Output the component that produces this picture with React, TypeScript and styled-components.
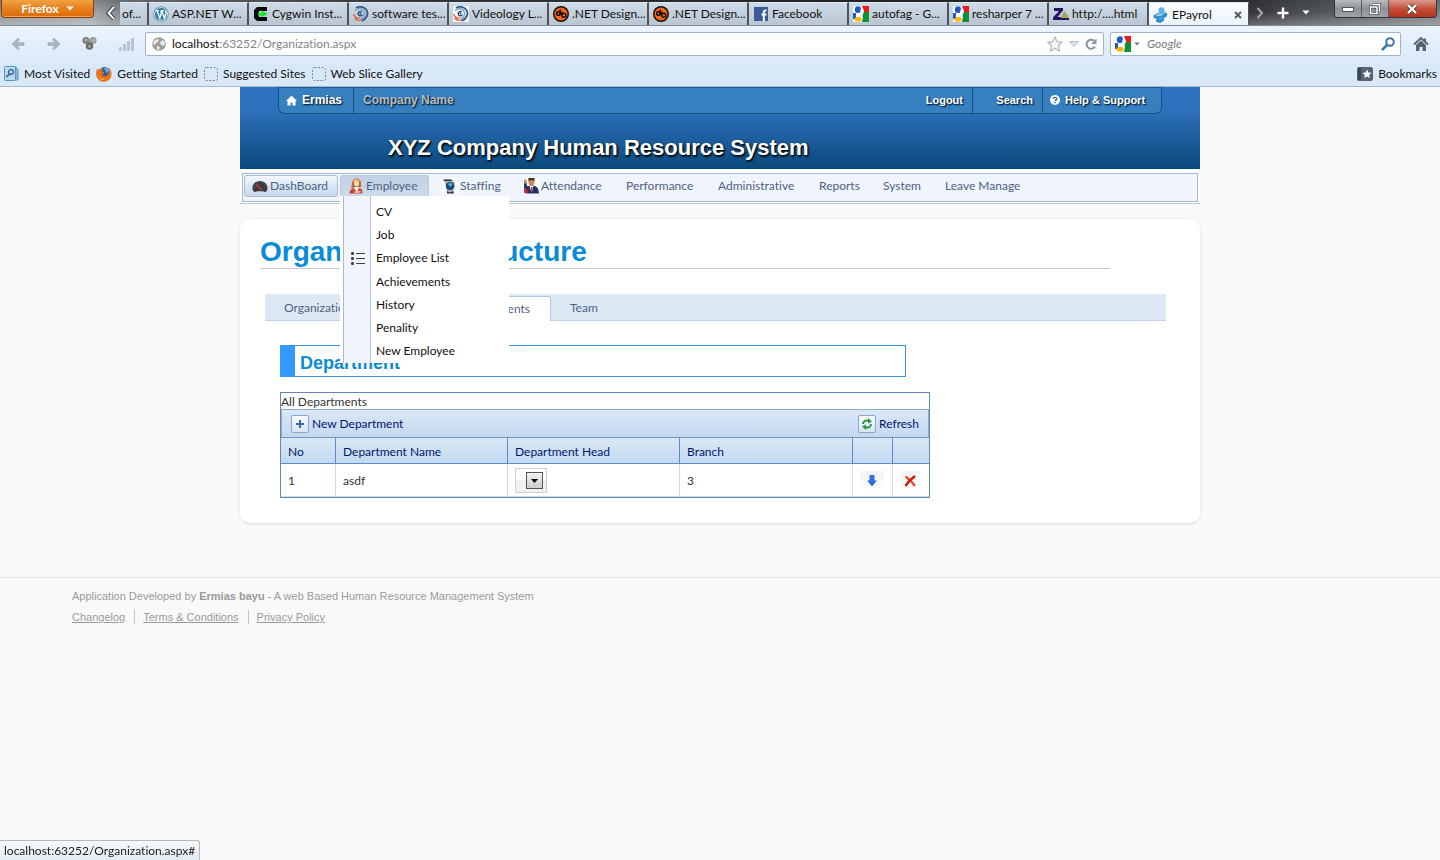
import React from "react";
import styled, { createGlobalStyle, css } from "styled-components";

const ui = `Lato, "Open Sans", sans-serif`;
const arial = `"Liberation Sans", Arial, sans-serif`;

const Global = createGlobalStyle`
  * { box-sizing: border-box; }
  html, body { margin: 0; padding: 0; }
  body { background: #f9f9f9; font-family: ${ui}; font-size: 12px; line-height: 16px; font-variant-ligatures: none; color: #333; }
  button, input, select { font: inherit; font-variant-ligatures: none; color: inherit; margin: 0; }
  button { padding: 0; border: 0; background: none; cursor: pointer; }
  a { color: inherit; text-decoration: none; }
  svg { display: block; flex: none; }
  ul { list-style: none; margin: 0; padding: 0; }
`;

/* ---------- browser chrome ---------- */

const Screen = styled.div`
  min-height: 100vh;
  display: flex;
  flex-direction: column;
`;

const TabStrip = styled.div`
  display: flex;
  align-items: stretch;
  height: 26px;
  overflow: hidden;
  border-bottom: 1px solid #7d8893;
  background:
    linear-gradient(rgba(30, 32, 36, 0.25), rgba(255, 255, 255, 0) 50%, rgba(255, 255, 255, 0.25)),
    linear-gradient(90deg, #8f979e 0, #a3a9af 90px, #7b7f84 130px, #3a3c3f 400px, #222427 900px, #303236 1240px, #4b4e53 1300px, #7d8288 1440px);
`;

const FirefoxButton = styled.button`
  width: 93px;
  height: 18px;
  margin: 0 10px 0 1px;
  display: flex;
  align-items: center;
  justify-content: center;
  gap: 7px;
  color: #fff;
  font-weight: 700;
  border: 1px solid #8d3f06;
  border-top: 0;
  border-radius: 0 0 4px 4px;
  background: linear-gradient(#f0a243, #e8811f 50%, #dc6a08);
  box-shadow: inset 0 -1px 0 #f0a35a;
`;

const StripButton = styled.button<{ $w: number }>`
  width: ${(p) => p.$w}px;
  flex: none;
  display: flex;
  align-items: center;
  justify-content: center;
`;

const BrowserTab = styled.button<{ $active?: boolean; $clipped?: boolean }>`
  flex: 0 1 ${(p) => (p.$clipped ? 29 : 100)}px;
  min-width: 0;
  height: 23px;
  margin-top: 2px;
  padding-left: ${(p) => (p.$clipped ? 2 : 4)}px;
  display: flex;
  align-items: center;
  gap: 3px;
  color: #111;
  white-space: nowrap;
  text-align: left;
  border-right: 2px solid #4e5359;
  border-top: 1px solid #dfe8f1;
  background: linear-gradient(#cedbe8, #b9c5d0);
  ${(p) => p.$active && css`
    height: 24px;
    padding-right: 6px;
    border-right-width: 1px;
    background: linear-gradient(#fbfdff, #eaf3fc);
  `}
`;

const TabText = styled.span`
  flex: 1;
`;

const WindowButtons = styled.div`
  display: flex;
  margin-left: auto;
  margin-right: 3px;
  height: 18px;
  border: 1px solid #33363b;
  border-top: 0;
  border-radius: 0 0 4px 4px;
  overflow: hidden;
`;

const WindowButton = styled.button<{ $close?: boolean }>`
  width: ${(p) => (p.$close ? 47 : 27)}px;
  display: flex;
  align-items: center;
  justify-content: center;
  border-right: 1px solid ${(p) => (p.$close ? "transparent" : "#5c6067")};
  background: ${(p) => (p.$close ? "linear-gradient(#d99a8c, #c5513b 50%, #b5321a)" : "linear-gradient(#b9bdc2, #8d9298 50%, #9fa4aa)")};
`;

const Toolbars = styled.div`
  background: linear-gradient(#ebf4fd, #d9e8f7 40px);
  border-bottom: 1px solid #a3b9d2;
`;

const NavBar = styled.div`
  height: 35px;
  display: flex;
  align-items: center;
`;

const NavButton = styled.button<{ $w: number }>`
  width: ${(p) => p.$w}px;
  flex: none;
  height: 24px;
  display: flex;
  align-items: center;
  justify-content: center;
`;

const Field = styled.div<{ $w?: number }>`
  flex: ${(p) => (p.$w ? `0 1 ${p.$w}px` : "1")};
  height: 24px;
  display: flex;
  align-items: center;
  margin-right: ${(p) => (p.$w ? 0 : 6)}px;
  padding: 0 5px 0 ${(p) => (p.$w ? 4 : 6)}px;
  background: #fff;
  border: 1px solid #a0b4cb;
  border-radius: 2px;
`;

const UrlText = styled.a`
  flex: 1;
  margin-left: 6px;
  color: #858585;
  b { color: #111; font-weight: 400; }
`;

const SearchInput = styled.input`
  flex: 1;
  min-width: 0;
  border: 0;
  padding: 0;
  margin-left: 4px;
  outline: 0;
  background: none;
  &::placeholder { color: #777; opacity: 1; font-style: italic; }
`;

const BookmarkBar = styled.nav`
  height: 25px;
  display: flex;
  align-items: center;
  padding: 0 3px 0 4px;
  gap: 6px;
`;

const Bookmark = styled.a<{ $end?: boolean }>`
  display: flex;
  align-items: center;
  gap: 5px;
  color: #111;
  margin-left: ${(p) => (p.$end ? "auto" : "0")};
`;

const StatusBubble = styled.output`
  position: fixed;
  left: 0;
  bottom: 0;
  height: 20px;
  padding: 2px 4px;
  color: #222;
  background: linear-gradient(#f6f9fc, #e4ebf3);
  border: 1px solid #b5b8bc;
  border-left: 0;
  border-bottom: 0;
  border-radius: 0 3px 0 0;
`;

/* ---------- page ---------- */

const Page = styled.div`
  width: 100%;
  max-width: 960px;
  margin: 0 auto;
`;

const Header = styled.header`
  height: 82px;
  background: linear-gradient(#2f72c0, #2d70ba 30%, #0b497b);
`;

const TopBar = styled.div`
  height: 27px;
  margin: 0 38px;
  display: flex;
  font: 700 11px/24px ${arial};
  color: #fff;
  text-shadow: 1px 1px 1px #0b2c4a, 1px 1px 2px #0b2c4a;
  background: #3780c0;
  border: 1px solid #12507f;
  border-top-color: #1d5b93;
  border-radius: 0 0 6px 6px;
`;

const TopLink = styled.a<{ $w?: number; $big?: boolean; $right?: boolean }>`
  width: ${(p) => (p.$w ? `${p.$w}px` : "auto")};
  font-size: ${(p) => (p.$big ? 12 : 11)}px;
  display: flex;
  align-items: center;
  justify-content: ${(p) => (p.$right ? "flex-end" : "flex-start")};
  gap: 5px;
  padding: 0 9px 1px 7px;
  white-space: nowrap;
  border-right: 1px solid #12507f;
  &:last-child { border-right: 0; }
`;

const CompanyName = styled.span`
  flex: 1;
  padding-left: 9px;
  font-size: 12px;
  color: #b9bcc0;
`;

const SystemTitle = styled.h1`
  margin: 0;
  padding: 20px 0 0 148px;
  font: 700 22px/28px ${arial};
  color: #fff;
  text-shadow: 1px 1px 2px #000, 1px 2px 2px #06233d;
`;

const MenuFrame = styled.div`
  padding: 4px 2px 1px;
  background: #fff;
  border-bottom: 1px solid #c9c9c9;
`;

const MenuBar = styled.ul`
  height: 29px;
  padding: 1px;
  display: flex;
  background: #f0f4fc;
  border: 1px solid #a5b9d3;
  color: #4d6282;
`;

const MenuItem = styled.li<{ $w: number }>`
  position: relative;
  width: ${(p) => p.$w}px;
`;

const MenuButton = styled.button<{ $look?: "raised" | "open"; $pad: number }>`
  width: calc(100% - 2px);
  height: 22px;
  display: flex;
  align-items: center;
  gap: 2px;
  padding-left: ${(p) => p.$pad}px;
  white-space: nowrap;
  border: 1px solid transparent;
  border-radius: 3px;
  ${(p) => p.$look === "raised" && css`
    border-color: #a5bbd6;
    background: linear-gradient(#f3f8fe, #dbe7f5 50%, #c8d8ec);
  `}
  ${(p) => p.$look === "open" && css`
    border-color: #b9c9df;
    border-bottom-color: #cddaeb;
    border-radius: 3px 3px 0 0;
    background: linear-gradient(#c3d1e5, #cddaeb);
  `}
`;

const DropDown = styled.ul`
  position: absolute;
  z-index: 2;
  top: 21px;
  left: 0;
  width: 169px;
  padding: 4px 0 1px 3px;
  color: #111;
  background: linear-gradient(90deg, #fff 3px, #a9b9d1 3px, #a9b9d1 4px, #f0f4fc 4px, #f0f4fc 30px, #b2c6e0 30px, #b2c6e0 31px, #fff 31px);
`;

const DropItem = styled.li<{ $icon?: boolean }>`
  height: ${(p) => (p.$icon ? 24 : 23)}px;
  display: grid;
  grid-template-columns: 33px 1fr;
  align-items: center;
  svg { margin-left: 8px; }
  a { grid-column: 2; }
`;

const Card = styled.main`
  margin-top: 15px;
  padding: 16px 34px 25px 20px;
  background: #fff;
  border-radius: 10px;
  box-shadow: 0 1px 3px #dcdcdc;
`;

const PageTitle = styled.h2`
  margin: 0 56px 25px 0;
  font: 700 28px/33px ${arial};
  color: #0a8bd8;
  border-bottom: 1px solid #c8c8c8;
`;

const Tabs = styled.div`
  height: 27px;
  margin-left: 5px;
  display: flex;
  align-items: flex-end;
  background: #dde8f5;
  border-bottom: 1px solid #c3d2e6;
`;

const Tab = styled.button<{ $w: number; $active?: boolean }>`
  width: ${(p) => p.$w}px;
  height: 25px;
  padding-left: 19px;
  text-align: left;
  color: #4d6282;
  ${(p) => p.$active && css`
    background: #fff;
    border: 1px solid #b1c5e0;
    border-bottom: 0;
    border-radius: 3px 3px 0 0;
    margin-bottom: -1px;
  `}
`;

const Section = styled.section`
  padding: 24px 0 0 20px;
`;

const SectionTitle = styled.h3`
  max-width: 626px;
  height: 32px;
  margin: 0 0 15px;
  padding-left: 5px;
  font: 700 18px/35px ${arial};
  color: #0a8bd8;
  border: 1px solid #3b93e8;
  border-left: 15px solid #3399ff;
`;

const Grid = styled.div`
  max-width: 650px;
  border: 1px solid #6288b8;
`;

const GridCaption = styled.div`
  height: 16px;
  line-height: 18px;
`;

const CommandBar = styled.div`
  height: 29px;
  padding: 0 9px;
  display: flex;
  align-items: center;
  justify-content: space-between;
  border: 1px solid #8fabd0;
  border-bottom-color: #6f95c4;
  background: linear-gradient(#dbe7f5, #c3d9f1);
  color: #00156e;
`;

const Command = styled.button`
  display: flex;
  align-items: center;
  gap: 3px;
  line-height: 20px;
`;

const CommandIcon = styled.span`
  width: 18px;
  height: 18px;
  display: grid;
  place-items: center;
  border: 1px solid #8ba9cf;
  border-radius: 2px;
  background: linear-gradient(#f7fafd, #d8e5f4);
`;

const Table = styled.table`
  width: 100%;
  table-layout: fixed;
  border-collapse: separate;
  border-spacing: 0;
  th {
    height: 26px;
    padding: 2px 7px 0;
    text-align: left;
    font-weight: 400;
    color: #00156e;
    background: linear-gradient(#dbe7f5, #c3d9f1);
    border-bottom: 1px solid #5d8cc9;
    border-right: 1px solid #5d8cc9;
  }
  td {
    height: 33px;
    padding: 1px 7px 0;
    border-right: 1px solid #d0dbea;
    border-bottom: 1px solid #d0dbea;
  }
  th:last-child, td:last-child { border-right: 0; }
`;

const Combo = styled.label`
  width: 32px;
  height: 25px;
  display: grid;
  align-items: center;
  justify-items: end;
  padding-right: 3px;
  border: 1px solid #cfcfcf;
  background: linear-gradient(#fff 50%, #f1f1f1 50%);
  select, svg { grid-area: 1 / 1; }
  svg { pointer-events: none; }
  select {
    appearance: none;
    width: 17px;
    height: 17px;
    padding: 0;
    border: 1px solid #555;
    border-radius: 0;
    background: linear-gradient(#f4f4f4, #cdcdcd);
  }
`;

const RowButton = styled.button<{ $w: number }>`
  width: ${(p) => p.$w}px;
  height: 20px;
  display: grid;
  place-items: center;
  background: linear-gradient(#f2f2f2, #fff);
`;

const Footer = styled.footer`
  margin-top: 54px;
  padding: 9px 5%;
  border-top: 1px solid #e6e6e6;
  font: 11px/18px ${arial};
  color: #999;
  p { margin: 0; }
`;

const FooterLinks = styled.nav`
  display: flex;
  margin-top: 5px;
  line-height: 14px;
  a { text-decoration: underline; }
  a + a { margin-left: 9px; padding-left: 8px; border-left: 1px solid #c4c4c4; }
`;

/* ---------- icons ---------- */

const Svg = ({ s = 16, h, children }: { s?: number; h?: number; children: React.ReactNode }) => (
  <svg width={s} height={h ?? s} viewBox={`0 0 ${s} ${h ?? s}`} aria-hidden="true">{children}</svg>
);

const Wordpress = () => (
  <Svg><circle cx="8" cy="8" r="7.6" fill="#2f7ba3" /><circle cx="8" cy="8" r="6.5" fill="none" stroke="#e6f1f6" strokeWidth="0.9" />
    <path d="M3 4.6h3M8 4.6h3M4 4.8l2.8 7.4L8.4 7 7.4 4.8M8.8 4.8l2.6 7.4 1.7-5c.2-1-.5-1.6-.8-2.6" fill="none" stroke="#fff" strokeWidth="1.4" /></Svg>
);
const Cygwin = () => (
  <Svg><path d="M14 1H4L1 4v8l3 3h10v-4H6V5h8z" fill="#050505" /><path d="M5 6.500h4L7.500 4 15 8l-7.500 3.500L9 9.500H5z" fill="#1fe02a" /></Svg>
);
const Swirl = ({ bg }: { bg?: boolean }) => (
  <Svg>{bg && <rect width="16" height="16" fill="#f7f9fb" />}
    <path d="M3 2C6 0 11 .5 13.500 4c2.500 4 0 9-5 11" fill="none" stroke="#315a85" strokeWidth="1.800" />
    <path d="M2 4.500C5 1.500 10 2.500 11.500 6c1 3-1 6-4 7" fill="none" stroke="#7ea6c9" strokeWidth="1.600" />
    <path d="M9.500 8.500c-1 2-4 1.500-4.300-.5-.2-2 2-3 3.500-2" fill="none" stroke="#27517d" strokeWidth="1.500" /><circle cx="7.500" cy="7.500" r="1" fill="#27517d" />
    <path d="M.8 8c.4 3.500 3 4.600 6 3.600M1.500 12c2 2.400 5 2.600 7 1.600" fill="none" stroke="#dc6a4b" strokeWidth="1.500" /></Svg>
);
const OrangeDo = () => (
  <Svg><circle cx="8" cy="8" r="8" fill="#17110d" /><circle cx="8" cy="8" r="6.500" fill="#f26a12" />
    <g fill="none" stroke="#17110d" strokeWidth="1.500"><circle cx="5.400" cy="7.500" r="1.800" /><circle cx="10.800" cy="9.200" r="2" /><path d="M7.200 3.500l-.1 5.500M8.600 9V5.500" /></g></Svg>
);
const Facebook = () => (
  <Svg><rect x="1" y="1" width="14" height="14" fill="#3b5998" /><path d="M13.500 4.500h-1.300c-1 0-1.400.5-1.400 1.500v9M8.500 8.500h5" fill="none" stroke="#fff" strokeWidth="2" /></Svg>
);
const Google = () => (
  <Svg><rect width="16" height="16" fill="#fff" /><path d="M9 0h7v6h-5z" fill="#f01818" /><path d="M9 6h7v10H9z" fill="#109038" /><path d="M0 7h3v6H0z" fill="#1f58c8" /><path d="M4 11h6l-1 5H4z" fill="#fff" />
    <ellipse cx="5" cy="3.700" rx="3.200" ry="3.400" fill="#1f58c8" /><path d="M5 6.500l5 3-1 2.500-5-2z" fill="#fff" /><path d="M8 2l3 2-1 5-3-2z" fill="#fff" /><ellipse cx="5" cy="13.200" rx="3.600" ry="2.500" fill="#f8b711" /></Svg>
);
const ZedIcon = () => (
  <Svg><path d="M1 2h9v2.500L4.500 11H9v3H0v-2.500L6 5H1z" fill="#24125f" /><path d="M11.500 5L16 12H7.500z" fill="#a6a84e" /><path d="M8 12h8v2H8z" fill="#24125f" /></Svg>
);
const Puzzle = () => (
  <Svg><ellipse cx="8.500" cy="3.500" rx="3" ry="3.200" fill="#5fb4e6" /><path d="M1 8l4-2 8-.5 1.500 2-1.500 2.500-1.500.5-1 3.500-3.500 2-4-1.500.5-3.500-3 .500z" fill="#2c88c8" /><path d="M2 8l4-1.600 6-.3-3 2.400-4 1z" fill="#8ccdf2" /><path d="M6 10.500l4-1-.6 3-3.400 1z" fill="#4ea6dc" /></Svg>
);
const Globe = () => (
  <Svg s={14}><circle cx="7" cy="7" r="6.800" fill="#9d9d9d" /><path d="M2 4c2-2 4-2 5-1.500L6 5 4 6 3 8 1 7zM8 5l3-2 2 3-1 3-3-1zM5 9l3 1-1 3-2-1z" fill="#ececec" /></Svg>
);
const ArrowIcon = ({ flip }: { flip?: boolean }) => (
  <Svg s={14}><path transform={flip ? "translate(14 0) scale(-1 1)" : undefined} d="M1 7l6-6 1.500 1.500L6 5.700h7v2.800H6l2.500 3L7 13z" fill="#a9b6c3" stroke="#98a7b6" strokeWidth="0.600" /></Svg>
);
const Trefoil = () => (
  <Svg s={15}><circle cx="4" cy="4.500" r="3.600" fill="#7f7f7f" /><circle cx="11" cy="4.500" r="3.600" fill="#9b9b9b" /><circle cx="7.500" cy="10" r="3.800" fill="#6d6d6d" /><circle cx="4" cy="4" r="1.300" fill="#b4b4b4" /><circle cx="11.500" cy="4.500" r="1.300" fill="#bdbdbd" /><circle cx="7.500" cy="10.500" r="1.400" fill="#a8a8a8" /></Svg>
);
const Bars = () => (
  <Svg s={16}><g fill="#b3c4d4"><rect x="1" y="11" width="3" height="4" rx="1" /><rect x="5" y="8" width="3" height="7" rx="1" /><rect x="9" y="5" width="3" height="10" rx="1" /><rect x="13" y="2" width="3" height="13" rx="1" /></g></Svg>
);
const Star = () => (
  <Svg><path d="M8 1l2.200 4.700 5 .6-3.700 3.500 1 5.200L8 12.500 3.500 15l1-5.200L.8 6.300l5-.6z" fill="#f4f4f4" stroke="#b5b8bb" strokeWidth="1.200" /></Svg>
);
const Caret = ({ fill, w = 8, stroke }: { fill: string; w?: number; stroke?: string }) => (
  <svg width={w} height={w / 2 + 1} viewBox="0 0 10 6" aria-hidden="true"><path d="M.5.5h9L5 5.500z" fill={fill} stroke={stroke} /></svg>
);
const Reload = () => (
  <Svg s={12}><path d="M10 8.500A4.500 4.500 0 1 1 9 2.800" fill="none" stroke="#8895a3" strokeWidth="2" /><path d="M11.500.5v5.500h-5.500z" fill="#8895a3" /></Svg>
);
const Magnifier = () => (
  <Svg s={14}><circle cx="9" cy="5" r="3.800" fill="none" stroke="#3d78b4" strokeWidth="2" /><path d="M6 8L1 13" stroke="#3d78b4" strokeWidth="2.600" /></Svg>
);
const Home = () => (
  <Svg><path d="M1 8.500L8 2l7 6.500M12 2.500v3" fill="none" stroke="#58646f" strokeWidth="2" /><path d="M3 9l5-4.500L13 9v6H9.500v-4h-3v4H3z" fill="#58646f" /></Svg>
);
const MostVisited = () => (
  <Svg s={15}><path d="M3 1h9l2 3v10H3z" fill="#8fb8d8" stroke="#5f93bd" /><rect x=".5" y=".5" width="11" height="14" rx="1" fill="#b9d8ec" stroke="#5a92bd" /><circle cx="7" cy="6" r="2.400" fill="none" stroke="#2f6391" strokeWidth="1.300" /><path d="M5.500 7.800L2.500 11" stroke="#2f6391" strokeWidth="1.700" /></Svg>
);
const Firefox = () => (
  <Svg><circle cx="8.500" cy="7" r="6" fill="#2b5f9d" /><path d="M8 2c3-1 5 1 5.500 3l-3 2z" fill="#69a9dc" /><path d="M1 3c1 .4 2 .5 3 .5C5 2 6 2 7 2L5.500 5l3 1.500C7 8 6 8 6.500 9.500c2 1.500 5 .5 6-2C13.500 5 13 3 12 1.500 15.500 4 16.500 8 14.500 12c-3 5-10 5-13 .5C-.5 9 0 6 1 3z" fill="#e8701a" /><path d="M1.500 7C2 11 5 14 10 13c-4 2.500-8 0-8.500-6z" fill="#fbb735" /></Svg>
);
const Dashed = () => (
  <Svg s={14}><rect x=".5" y=".5" width="13" height="13" rx="2" fill="none" stroke="#7d858d" strokeDasharray="2 1.500" /></Svg>
);
const BookmarksIcon = () => (
  <Svg><rect y="1" width="16" height="14" rx="2" fill="#566370" /><path d="M1 2h3v12H1z" fill="#3b4651" /><path d="M10 3.500l1.300 3 3.200.3-2.400 2.100.7 3.100L10 10.400 7.200 12l.7-3.100-2.400-2.100 3.200-.3z" fill="#fff" /></Svg>
);
const Gauge = () => (
  <Svg><path d="M1 12.500C-1 7.500 3 3 8 3s9 4.500 7 9.500c-1 2-3 1.500-4 .8H5c-1 .7-3 1.200-4-.8z" fill="#3b3b3d" /><path d="M2.500 9.500a5.500 5.500 0 0 1 11 0" fill="none" stroke="#777" strokeDasharray="1 1.300" /><path d="M4 6.500L10 12" stroke="#d23a35" strokeWidth="1.300" /></Svg>
);
const Woman = () => (
  <Svg><path d="M3 10C4.500 7 3 .5 8.500.5S13 6 13 9z" fill="#b5682f" /><path d="M4.500 4C5 0 11-.5 12.500 4L9 2.500z" fill="#e9ad5e" /><ellipse cx="8.500" cy="5.500" rx="2.500" ry="3" fill="#fbd9b8" /><path d="M1.500 15.500c0-3.500 2-5 4.500-5.500l2.500 1.500L11 10c3 .5 3.500 2 3.500 5.500z" fill="#cf4334" /><path d="M5.500 9.500h5.500L9 14z" fill="#fff" /><path d="M6.500 13.500l6-.5v1.500l-6 .5z" fill="#fbd9b8" /></Svg>
);
const Helmet = () => (
  <Svg><rect width="16" height="16" fill="#fff" /><path d="M2 1.500h8l3 3v5l-3 5H5l-1-5z" fill="#aab2ba" /><path d="M1.500 1.500h8v1.500h-8z" fill="#333" /><circle cx="8" cy="8" r="4" fill="#174a75" /><path d="M6 6c2-2 4-1 4.500.5L8 9z" fill="#58b0dd" /><path d="M5 13c2 2 5 1.500 6-.5l1 3H5z" fill="#27313c" /></Svg>
);
const Man = () => (
  <Svg><rect width="16" height="16" fill="#fff" /><path d="M5.500 1h5l1 3-1 4h-4l-1-3z" fill="#c98c62" /><path d="M5.500 0h6v3l-3-1-3 1z" fill="#4b2a1e" /><path d="M1 4l2.500 0 .5 4 2 0 2 2 3-2c3 0 4.500 2 5 7.500H3L1 10z" fill="#1e3566" /><path d="M1 1.500h2.500v4H1z" fill="#c98c62" /><path d="M7 8h3l-1 6-1.500-2z" fill="#fff" /><path d="M8 9h1.200v5H8zM1 11l2-1 2 5H1z" fill="#d22d37" /></Svg>
);
const ListIcon = () => (
  <Svg s={14}><g fill="#444"><rect x="0" y="1" width="3" height="3" rx="1" /><rect x="0" y="6" width="3" height="3" rx="1" /><rect x="0" y="11" width="3" height="3" rx="1" /><rect x="5" y="2" width="9" height="1" /><rect x="5" y="7" width="9" height="1" /><rect x="5" y="12" width="9" height="1" /></g></Svg>
);

/* ---------- data ---------- */

const browserTabs = [
  { icon: <Wordpress />, text: "ASP.NET W..." },
  { icon: <Cygwin />, text: "Cygwin Inst..." },
  { icon: <Swirl />, text: "software tes..." },
  { icon: <Swirl bg />, text: "Videology L..." },
  { icon: <OrangeDo />, text: ".NET Design..." },
  { icon: <OrangeDo />, text: ".NET Design..." },
  { icon: <Facebook />, text: "Facebook" },
  { icon: <Google />, text: "autofag - G..." },
  { icon: <Google />, text: "resharper 7 ..." },
  { icon: <ZedIcon />, text: "http:/....html" },
];

const employeeMenu = ["CV", "Job", "Employee List", "Achievements", "History", "Penality", "New Employee"];

const plainMenu = [
  { text: "Performance", w: 92 },
  { text: "Administrative", w: 101 },
  { text: "Reports", w: 64 },
  { text: "System", w: 62 },
  { text: "Leave Manage", w: 96 },
];

export default function App() {
  return (
    <Screen>
      <Global />
      <TabStrip>
        <FirefoxButton>Firefox <Caret fill="#fff" /></FirefoxButton>
        <StripButton $w={16} aria-label="Scroll tabs left">
          <Svg s={12} h={14}><path d="M8 1L2.500 7 8 13" fill="none" stroke="#333" strokeWidth="4" /><path d="M8 1L2.500 7 8 13" fill="none" stroke="#fff" strokeWidth="2" /></Svg>
        </StripButton>
        <BrowserTab $clipped>of...</BrowserTab>
        {browserTabs.map((t, i) => (
          <BrowserTab key={i}>{t.icon}<TabText>{t.text}</TabText></BrowserTab>
        ))}
        <BrowserTab $active>
          <Puzzle /><TabText>EPayrol</TabText>
          <Svg s={8}><path d="M1 1l6 6M7 1L1 7" stroke="#555" strokeWidth="1.800" /></Svg>
        </BrowserTab>
        <StripButton $w={22} aria-label="Scroll tabs right">
          <Svg s={8} h={12}><path d="M1.500 1L6 6l-4.500 5" fill="none" stroke="#a4a7ab" strokeWidth="2" /></Svg>
        </StripButton>
        <StripButton $w={24} aria-label="New tab">
          <Svg s={12}><path d="M6 .5v11M.5 6h11" stroke="#fff" strokeWidth="2.400" /></Svg>
        </StripButton>
        <StripButton $w={22} aria-label="List all tabs"><Caret fill="#fff" w={8} /></StripButton>
        <WindowButtons>
          <WindowButton aria-label="Minimize"><Svg s={12} h={6}><rect x=".5" y="1.500" width="11" height="4" fill="#fff" stroke="#555" /></Svg></WindowButton>
          <WindowButton aria-label="Restore"><Svg s={12}><path d="M4 1.500h6.500V8M1.500 4H8v6.500H1.500z" fill="none" stroke="#4a4d52" strokeWidth="3" /><path d="M4 1.500h6.500V8M1.500 4H8v6.500H1.500z" fill="none" stroke="#fff" strokeWidth="1.500" /></Svg></WindowButton>
          <WindowButton $close aria-label="Close"><Svg s={12} h={10}><path d="M2 1l8 8M10 1L2 9" stroke="#5a3a36" strokeWidth="4" /><path d="M2 1l8 8M10 1L2 9" stroke="#fff" strokeWidth="2.400" /></Svg></WindowButton>
        </WindowButtons>
      </TabStrip>

      <Toolbars>
        <NavBar>
          <NavButton $w={36} aria-label="Back"><ArrowIcon /></NavButton>
          <NavButton $w={36} aria-label="Forward"><ArrowIcon flip /></NavButton>
          <NavButton $w={34} aria-label="Add-ons"><Trefoil /></NavButton>
          <NavButton $w={39} aria-label="Signal"><Bars /></NavButton>
          <Field>
            <Globe />
            <UrlText href="#"><b>localhost</b>:63252/Organization.aspx</UrlText>
            <NavButton $w={18} aria-label="Bookmark this page"><Star /></NavButton>
            <NavButton $w={20} aria-label="History"><Caret fill="#dde4ec" stroke="#b0bac5" w={10} /></NavButton>
            <NavButton $w={14} aria-label="Reload"><Reload /></NavButton>
          </Field>
          <Field $w={291}>
            <Google />
            <NavButton $w={12} aria-label="Choose search engine"><Caret fill="#777" w={6} /></NavButton>
            <SearchInput aria-label="Search" placeholder="Google" />
            <NavButton $w={14} aria-label="Go"><Magnifier /></NavButton>
          </Field>
          <NavButton $w={39} aria-label="Home"><Home /></NavButton>
        </NavBar>
        <BookmarkBar>
          <Bookmark href="#"><MostVisited />Most Visited</Bookmark>
          <Bookmark href="#"><Firefox />Getting Started</Bookmark>
          <Bookmark href="#"><Dashed />Suggested Sites</Bookmark>
          <Bookmark href="#"><Dashed />Web Slice Gallery</Bookmark>
          <Bookmark href="#" $end><BookmarksIcon />Bookmarks</Bookmark>
        </BookmarkBar>
      </Toolbars>

      <Page>
        <Header>
          <TopBar>
            <TopLink href="#" $w={75} $big>
              <Svg s={11}><path d="M0 6l5.500-5.500L11 6H9.500v4.500h-3v-3h-2v3h-3V6z" fill="#fff" /></Svg>Ermias
            </TopLink>
            <CompanyName>Company Name</CompanyName>
            <TopLink href="#" $w={60} $right>Logout</TopLink>
            <TopLink href="#" $w={70} $right>Search</TopLink>
            <TopLink href="#" $w={118}>
              <Svg s={10}><circle cx="5" cy="5" r="5" fill="#fff" /><path d="M3.300 4c0-2.200 3.400-2.200 3.400 0 0 1.200-1.700 1-1.700 2.200M5 7v1.300" fill="none" stroke="#2b5f93" strokeWidth="1.300" /></Svg>Help &amp; Support
            </TopLink>
          </TopBar>
          <SystemTitle>XYZ Company Human Resource System</SystemTitle>
        </Header>

        <MenuFrame>
          <MenuBar>
            <MenuItem $w={96}><MenuButton $look="raised" $pad={7}><Gauge />DashBoard</MenuButton></MenuItem>
            <MenuItem $w={91}>
              <MenuButton $look="open" $pad={7} aria-expanded="true"><Woman />Employee</MenuButton>
              <DropDown>
                {employeeMenu.map((m) => (
                  <DropItem key={m} $icon={m === "Employee List"}>
                    {m === "Employee List" && <ListIcon />}
                    <a href="#">{m}</a>
                  </DropItem>
                ))}
              </DropDown>
            </MenuItem>
            <MenuItem $w={82}><MenuButton $pad={10}><Helmet />Staffing</MenuButton></MenuItem>
            <MenuItem $w={101}><MenuButton $pad={9}><Man />Attendance</MenuButton></MenuItem>
            {plainMenu.map((m) => (
              <MenuItem key={m.text} $w={m.w}><MenuButton $pad={11}>{m.text}</MenuButton></MenuItem>
            ))}
          </MenuBar>
        </MenuFrame>

        <Card>
          <PageTitle>Organizational Structure</PageTitle>
          <Tabs role="tablist">
            <Tab role="tab" $w={176}>Organization</Tab>
            <Tab role="tab" $w={110} $active aria-selected="true">Departments</Tab>
            <Tab role="tab" $w={80}>Team</Tab>
          </Tabs>
          <Section>
            <SectionTitle>Department</SectionTitle>
            <Grid>
              <GridCaption>All Departments</GridCaption>
              <CommandBar>
                <Command>
                  <CommandIcon><Svg s={8}><path d="M4 0v8M0 4h8" stroke="#3b66b0" strokeWidth="2" /></Svg></CommandIcon>New Department
                </Command>
                <Command>
                  <CommandIcon><Svg s={12}><path d="M2 6C2 3 5 1.500 8 3" fill="none" stroke="#2f9440" strokeWidth="2" /><path d="M10 6c0 3-3 4.500-6 3" fill="none" stroke="#2f9440" strokeWidth="2" /><path d="M7 0l4 3.500L7 5.500zM5 12L1 8.500l4-2z" fill="#2f9440" /></Svg></CommandIcon>Refresh
                </Command>
              </CommandBar>
              <Table>
                <colgroup><col width="55" /><col width="172" /><col width="172" /><col width="173" /><col width="40" /><col /></colgroup>
                <thead>
                  <tr><th>No</th><th>Department Name</th><th>Department Head</th><th>Branch</th><th aria-label="Move" /><th aria-label="Delete" /></tr>
                </thead>
                <tbody>
                  <tr>
                    <td>1</td>
                    <td>asdf</td>
                    <td><Combo><select aria-label="Department head" /><Svg s={17}><path d="M5 7h7l-3.500 4z" fill="#000" /></Svg></Combo></td>
                    <td>3</td>
                    <td><RowButton $w={24} aria-label="Move down"><Svg s={12}><path d="M3.500 0h5v5.500H11L6 11.500 1 5.500h2.500z" fill="#2f6fe0" /></Svg></RowButton></td>
                    <td><RowButton $w={20} aria-label="Delete"><Svg s={12}><path d="M1.500 1.500C5 4 8 7 11 11" fill="none" stroke="#dc4a38" strokeWidth="2.200" /><path d="M11 1C7 4 4 7 1.500 11" fill="none" stroke="#c9200f" strokeWidth="2.600" /></Svg></RowButton></td>
                  </tr>
                </tbody>
              </Table>
            </Grid>
          </Section>
        </Card>
      </Page>

      <Footer>
        <p>Application Developed by <b>Ermias bayu</b> - A web Based Human Resource Management System</p>
        <FooterLinks>
          <a href="#">Changelog</a>
          <a href="#">Terms &amp; Conditions </a>
          <a href="#">Privacy Policy</a>
        </FooterLinks>
      </Footer>
      <StatusBubble>localhost:63252/Organization.aspx#</StatusBubble>
    </Screen>
  );
}
